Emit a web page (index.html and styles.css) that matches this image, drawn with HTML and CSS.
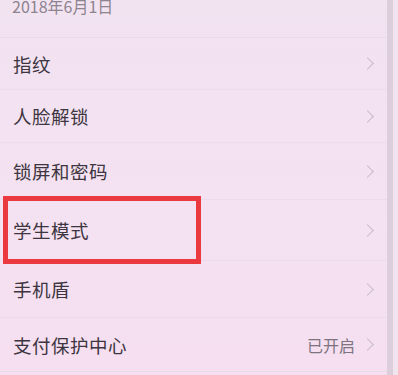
FILE: index.html
```html
<!DOCTYPE html>
<html lang="zh">
<head>
<meta charset="utf-8">
<link rel="stylesheet" href="styles.css">
</head>
<body>
<div class="screen">
  <div class="list">
    <div class="date"><span class="date-text">2018年6月1日</span></div>
    <div class="row h52"><span class="label">指纹</span><span class="chev"></span></div>
    <div class="row h53"><span class="label">人脸解锁</span><span class="chev"></span></div>
    <div class="row h57"><span class="label">锁屏和密码</span><span class="chev"></span></div>
    <div class="row h61"><span class="label">学生模式</span><span class="chev"></span><div class="highlight"></div></div>
    <div class="row h57"><span class="label">手机盾</span><span class="chev"></span></div>
    <div class="row h54"><span class="label">支付保护中心</span><span class="value">已开启</span><span class="chev"></span></div>
  </div>
  <div class="edge"></div>
  <div class="edge-out"></div>
</div>
</body>
</html>
```
FILE: styles.css
```css
html, body {
  margin: 0;
  padding: 0;
  width: 398px;
  height: 375px;
  overflow: hidden;
  background: #f3e2f1;
  font-family: "Noto Sans CJK SC", "Noto Sans", sans-serif;
}
.screen {
  display: flex;
  height: 375px;
  background: linear-gradient(180deg, #f2e3f1 0%, #f4e1f1 60%, #f5dff0 100%);
}
.list {
  flex: 1;
  display: flex;
  flex-direction: column;
}
.date {
  height: 38px;
  box-sizing: border-box;
  padding-left: 12px;
  border-bottom: 1px solid #eadbe8;
}
.date-text {
  display: block;
  font-size: 16px;
  line-height: 12px;
  color: #8d8490;
}
.row {
  position: relative;
  display: flex;
  align-items: center;
  box-sizing: border-box;
  padding: 0 12px 0 13px;
  border-bottom: 1px solid #ecdcea;
}
.h52 { height: 52px; }
.h53 { height: 53px; }
.h54 { height: 54px; }
.h57 { height: 57px; }
.h61 { height: 61px; }
.label {
  flex: 1;
  font-size: 18.5px;
  color: #3d3540;
  letter-spacing: 0.5px;
}
.value {
  font-size: 16px;
  color: #7d7480;
  margin-right: 8px;
}
.chev {
  width: 8px;
  height: 8px;
  border-top: 1.3px solid #c6bac6;
  border-right: 1.3px solid #c6bac6;
  transform: rotate(45deg);
  margin-right: 3px;
}
.highlight {
  position: absolute;
  left: 3px;
  top: -4px;
  width: 198px;
  height: 68px;
  box-sizing: border-box;
  border: 5px solid #ea3a40;
}
.edge {
  width: 6px;
  background: #dccfdb;
}
.edge-out {
  width: 5px;
  background: #f0e4ef;
}
```
